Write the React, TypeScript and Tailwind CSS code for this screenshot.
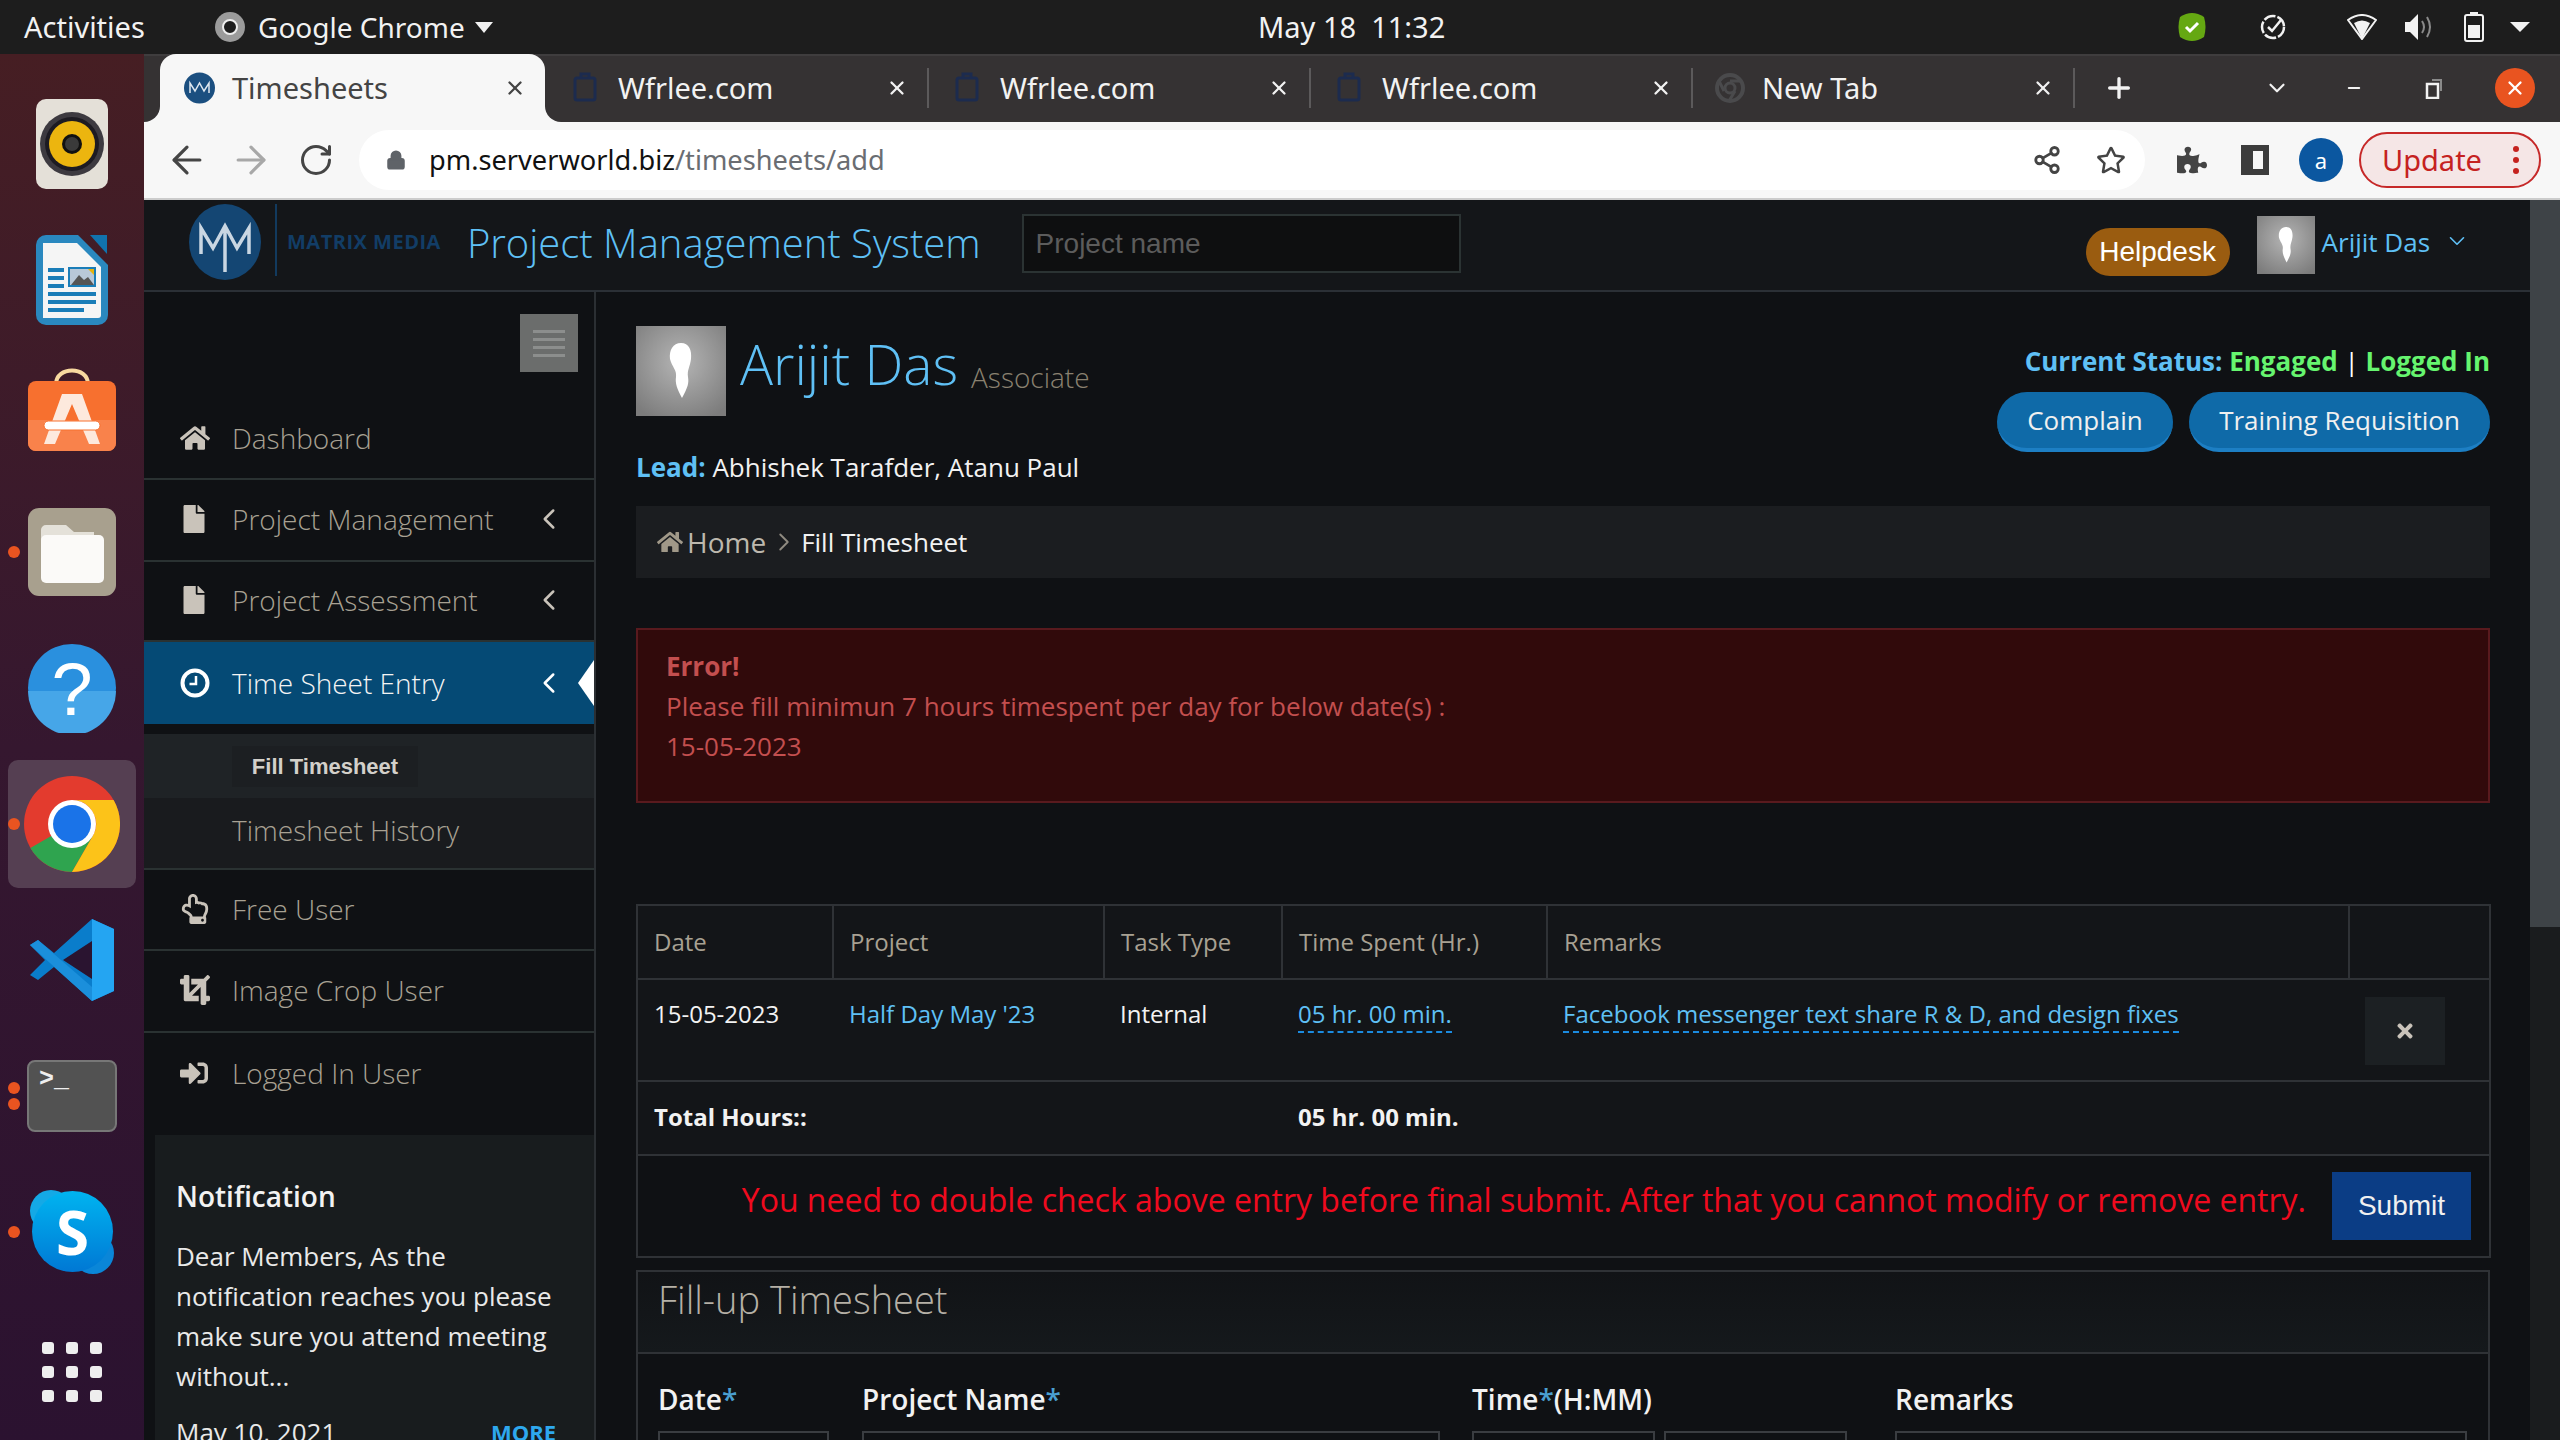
import { FaHome, FaFile, FaRegHandPointUp, FaCrop, FaSignInAlt, FaTimes, FaPuzzlePiece, FaRegStar } from 'react-icons/fa';
import { ArrowLeft, ArrowRight, RotateCw, Lock, Plus, ChevronDown, ChevronLeft, ChevronRight, X, Minus, Share2 } from 'lucide-react';

const UI_FONT = 'font-["Noto_Sans",sans-serif]';

// ---------- ubuntu dock icons ----------
function RhythmboxIcon() {
  return (
    <svg width="74" height="90" viewBox="0 0 74 90">
      <rect x="1" y="0" width="72" height="90" rx="10" fill="#e4e0d8" />
      <circle cx="37" cy="45" r="32" fill="#3d3a40" />
      <circle cx="37" cy="45" r="27" fill="#1d1b22" />
      <circle cx="37" cy="45" r="23" fill="#ecb50f" />
      <circle cx="37" cy="45" r="10" fill="#111" />
      <circle cx="37" cy="45" r="7" fill="#3a3a3a" />
    </svg>
  );
}

function WriterIcon() {
  return (
    <svg width="74" height="90" viewBox="0 0 74 90">
      <path d="M1 10a10 10 0 0 1 10-10h32l30 30v50a10 10 0 0 1-10 10H11a10 10 0 0 1-10-10z" fill="#2a88bf" />
      <path d="M8 8h34l24 24v48a3 3 0 0 1-3 3H8z" fill="#f5f5f5" />
      <path d="M55 0h17v19z" fill="#1173ad" />
      <g fill="#1a7db8">
        <rect x="13" y="33" width="16" height="4" /><rect x="13" y="41" width="16" height="4" /><rect x="13" y="49" width="16" height="4" />
        <rect x="13" y="57" width="48" height="4" /><rect x="13" y="65" width="48" height="4" /><rect x="13" y="73" width="36" height="4" />
        <rect x="33" y="32" width="28" height="20" />
      </g>
      <rect x="35" y="34" width="24" height="16" fill="#b8c8d8" />
      <path d="M36 50l8-10 5 5 4-3 6 8z" fill="#555" />
      <path d="M53 34h6v6z" fill="#e6b30d" />
    </svg>
  );
}

function SoftwareIcon() {
  return (
    <svg width="90" height="84" viewBox="0 0 90 84">
      <path d="M29 16c0-18 32-18 32 0" fill="none" stroke="#f8d9a0" strokeWidth="4" />
      <rect x="1" y="13" width="88" height="70" rx="8" fill="#f7702f" />
      <path d="M1 52h88v23a8 8 0 0 1-8 8H9a8 8 0 0 1-8-8z" fill="#f9824b" />
      <path d="M35 26h20l18 50H62L45 36 28 76H17z" fill="#fde9dd" />
      <rect x="17" y="53" width="56" height="9" rx="4.5" fill="#fff" stroke="#f7702f" strokeWidth="1" />
    </svg>
  );
}

function FilesIcon() {
  return (
    <svg width="90" height="88" viewBox="0 0 90 88">
      <rect x="1" y="0" width="88" height="88" rx="11" fill="#a8a08e" />
      <path d="M14 22a5 5 0 0 1 5-5h20l8 7h20v10H14z" fill="#e4e1d9" />
      <path d="M14 32a5 5 0 0 1 5-5h53a5 5 0 0 1 5 5v38a5 5 0 0 1-5 5H19a5 5 0 0 1-5-5z" fill="#fbfaf8" />
    </svg>
  );
}

function HelpIcon() {
  return (
    <svg width="90" height="90" viewBox="0 0 90 90">
      <circle cx="45" cy="45" r="44" fill="#2a90de" />
      <path d="M1 48h88a44 44 0 0 1-88 0z" fill="#46a6e8" />
      <text x="45" y="72" textAnchor="middle" fontSize="74" fontFamily="Liberation Sans, sans-serif" fill="#fff">?</text>
    </svg>
  );
}

function ChromeIcon({ size = 96 }: { size?: number }) {
  return (
    <svg width={size} height={size} viewBox="0 0 48 48">
      <circle cx="24" cy="24" r="24" fill="#e33b2e" />
      <path d="M24 24L3.2 36A24 24 0 0 0 24 48l10.4-18z" fill="#2fa44f" />
      <path d="M24 12h20.8A24 24 0 0 1 24 48l10.4-18A12 12 0 0 0 24 12z" fill="#fcc319" />
      <circle cx="24" cy="24" r="12" fill="#fff" />
      <circle cx="24" cy="24" r="9.5" fill="#1a73e8" />
    </svg>
  );
}

function VsCodeIcon() {
  return (
    <svg width="84" height="84" viewBox="0 0 84 82">
      <path d="M62 0L24 34 8 21 0 26l15 15L0 56l8 5 16-13 38 34 22-10V10z" fill="#0a7dcb" />
      <path d="M62 0l22 10v62L62 82z" fill="#24a5f2" />
      <path d="M62 22L33 41l29 19z" fill="#2a1430" />
      <path d="M8 21l54 47v14L0 26z" fill="#1b8fdb" />
    </svg>
  );
}

function TerminalIcon() {
  return (
    <div className="w-[90px] h-[72px] rounded-lg bg-[#525252] border-2 border-[#777] pl-[10px] pt-[6px] font-['Liberation_Mono',monospace] text-[25px] leading-[24px] font-bold text-[#eee]">
      {'>_'}
    </div>
  );
}

function SkypeIcon() {
  return (
    <div className="relative w-[84px] h-[84px]">
      <div className="absolute left-0 top-0 w-[42px] h-[42px] rounded-full bg-[#14a9e6]" />
      <div className="absolute right-0 bottom-0 w-[42px] h-[42px] rounded-full bg-[#0a86d8]" />
      <div className="absolute left-[2px] top-[1px] w-[81px] h-[81px] rounded-full bg-gradient-to-b from-[#00b4f0] to-[#0078d4] flex items-center justify-center font-['Open_Sans',sans-serif] text-[60px] font-bold text-white leading-none">
        S
      </div>
    </div>
  );
}

function RunDot({ top }: { top: number }) {
  return <span className="absolute left-[8px] w-[12px] h-[12px] rounded-full bg-[#e95420]" style={{ top }} />;
}

function Dock() {
  return (
    <aside className="relative w-[144px] shrink-0 flex flex-col items-center bg-gradient-to-b from-[#461e23] via-[#35172f] to-[#2b1230]">
      <div className="mt-[45px]"><RhythmboxIcon /></div>
      <div className="mt-[46px]"><WriterIcon /></div>
      <div className="mt-[43px]"><SoftwareIcon /></div>
      <div className="mt-[56px]"><FilesIcon /></div>
      <div className="mt-[47px]"><HelpIcon /></div>
      <div className="mt-[27px] w-[128px] h-[128px] rounded-[10px] bg-[#553f52] flex items-center justify-center"><ChromeIcon /></div>
      <div className="mt-[30px]"><VsCodeIcon /></div>
      <div className="mt-[58px]"><TerminalIcon /></div>
      <div className="mt-[58px]"><SkypeIcon /></div>
      <div className="mt-[68px] grid grid-cols-3 gap-[12px]">
        {Array.from({ length: 9 }).map((_, i) => (
          <span key={i} className="w-[12px] h-[12px] rounded-[3px] bg-[#eeeeee]" />
        ))}
      </div>
      <RunDot top={492} />
      <RunDot top={764} />
      <RunDot top={1028} />
      <RunDot top={1044} />
      <RunDot top={1172} />
    </aside>
  );
}

// ---------- gnome top bar ----------
function TopBar() {
  return (
    <header className={`h-[54px] shrink-0 bg-[#1d1d1d] flex items-center pr-[30px] text-[#f2f2f2] text-[28px] ${UI_FONT}`}>
      <div className="w-[1258px] shrink-0 pl-[24px] flex items-center">
        <span className="w-[190px] text-[29px]">Activities</span>
        <svg width="32" height="32" viewBox="0 0 32 32" className="mr-[12px]">
          <circle cx="16" cy="16" r="15" fill="#9b9b9b" />
          <circle cx="16" cy="16" r="7" fill="#1d1d1d" stroke="#eee" strokeWidth="2" />
        </svg>
        <span>Google Chrome</span>
        <span className="ml-[10px] w-0 h-0 border-x-[9px] border-x-transparent border-t-[11px] border-t-[#f2f2f2]" />
      </div>
      <span className="whitespace-pre text-[29px]">May 18  11:32</span>
      <svg width="32" height="32" viewBox="0 0 32 32" className="ml-auto">
        <path d="M4 6q12-8 24 0 3 10 0 20-12 8-24 0-3-10 0-20z" fill="#65a812" />
        <path d="M10 16l4 4 8-8" fill="none" stroke="#fff" strokeWidth="3" />
      </svg>
      <svg width="26" height="26" viewBox="0 0 26 26" className="ml-[52px]">
        <circle cx="13" cy="13" r="11" fill="none" stroke="#f2f2f2" strokeWidth="2.5" strokeDasharray="12 2" />
        <path d="M8 13l4 4 9-11" fill="none" stroke="#f2f2f2" strokeWidth="2.5" />
      </svg>
      <svg width="30" height="26" viewBox="0 0 30 26" className="ml-[61px]">
        <path d="M15 25L7 9q8-5 16 0z" fill="#f2f2f2" />
        <path d="M1 6q14-10 28 0L15 25z" fill="none" stroke="#f2f2f2" strokeWidth="2" />
      </svg>
      <svg width="30" height="28" viewBox="0 0 30 28" className="ml-[27px]">
        <path d="M1 9h5l8-8v26l-8-8H1z" fill="#f2f2f2" />
        <path d="M18 8q4 6 0 12M23 4q6 10 0 20" fill="none" stroke="#8a8a8a" strokeWidth="2" />
      </svg>
      <svg width="20" height="30" viewBox="0 0 20 30" className="ml-[30px]">
        <rect x="1" y="3" width="18" height="26" rx="2" fill="none" stroke="#f2f2f2" strokeWidth="2" />
        <rect x="6" y="0" width="8" height="3" fill="#f2f2f2" />
        <rect x="4" y="13" width="12" height="13" fill="#f2f2f2" />
      </svg>
      <span className="ml-[26px] w-0 h-0 border-x-[10px] border-x-transparent border-t-[10px] border-t-[#f2f2f2]" />
    </header>
  );
}

// ---------- chrome window ----------
function MatrixFavicon() {
  return (
    <svg width="31" height="32" viewBox="0 0 31 32" className="shrink-0">
      <circle cx="15.5" cy="16" r="15.5" fill="#1b4f80" />
      <path d="M6 21V11l5 8 4.500-8 4.500 8 5-8v10" fill="none" stroke="#dfe8f0" strokeWidth="1.500" />
    </svg>
  );
}

function ClockFavicon() {
  return (
    <svg width="32" height="32" viewBox="0 0 32 32" className="shrink-0">
      <rect x="6" y="6" width="20" height="22" rx="2" fill="none" stroke="#1c2b4e" strokeWidth="3" />
      <path d="M12 6V2h8v4" fill="none" stroke="#1c2b4e" strokeWidth="3" />
    </svg>
  );
}

function NewTabFavicon() {
  return (
    <svg width="30" height="32" viewBox="0 0 30 32" className="shrink-0">
      <circle cx="15" cy="16" r="13" fill="none" stroke="#4a4a4c" strokeWidth="4" />
      <circle cx="15" cy="16" r="5" fill="none" stroke="#4a4a4c" strokeWidth="3" />
      <path d="M15 9h12M9 19L4 9M20 19l-6 10" stroke="#4a4a4c" strokeWidth="3" />
    </svg>
  );
}

function Tab({ title, active, newTab }: { title: string; active?: boolean; newTab?: boolean }) {
  return (
    <div
      className={
        active
          ? 'relative w-[385px] h-[68px] mr-[2px] pl-[24px] pr-[19px] bg-[#f7f7f7] rounded-t-[16px] flex items-center text-[#444]'
          : 'w-[382px] h-[40px] pl-[22px] pr-[19px] border-r-2 border-r-[#5c5a5b] flex items-center text-[#f2f2f2]'
      }
    >
      {active && <span className="absolute left-[-16px] bottom-0 w-[16px] h-[16px] bg-[#f7f7f7]"><span className="block w-full h-full rounded-br-[16px] bg-[#353233]" /></span>}
      {active && <span className="absolute right-[-16px] bottom-0 w-[16px] h-[16px] bg-[#f7f7f7]"><span className="block w-full h-full rounded-bl-[16px] bg-[#353233]" /></span>}
      {active ? <MatrixFavicon /> : newTab ? <NewTabFavicon /> : <ClockFavicon />}
      <span className="ml-[17px]">{title}</span>
      <X className="ml-auto" size={22} strokeWidth={2.5} />
    </div>
  );
}

function TabStrip() {
  return (
    <div className={`h-[68px] shrink-0 pl-[16px] bg-[#353233] shadow-[inset_0_2px_0_#3f3d3e] flex items-center text-[29px] ${UI_FONT}`}>
      <Tab title="Timesheets" active />
      <Tab title="Wfrlee.com" />
      <Tab title="Wfrlee.com" />
      <Tab title="Wfrlee.com" />
      <Tab title="New Tab" newTab />
      <Plus className="ml-[28px] text-[#f2f2f2]" size={32} strokeWidth={2.5} />
      <ChevronDown className="ml-[129px] text-[#f2f2f2]" size={26} strokeWidth={2} />
      <Minus className="ml-[55px] text-[#f2f2f2]" size={18} strokeWidth={2.5} />
      <svg width="20" height="22" viewBox="0 0 20 22" className="ml-[61px] text-[#f2f2f2]">
        <rect x="3" y="7" width="11" height="14" fill="none" stroke="currentColor" strokeWidth="2.5" />
        <path d="M8 3h9v11" fill="none" stroke="#8a8a8a" strokeWidth="2" />
      </svg>
      <span className="ml-[51px] w-[40px] h-[40px] rounded-full bg-[#e95420] flex items-center justify-center text-white"><X size={22} strokeWidth={2.5} /></span>
    </div>
  );
}

function Toolbar() {
  return (
    <div className={`h-[78px] shrink-0 bg-[#f7f7f7] border-b-2 border-b-[#cccccc] flex items-center ${UI_FONT}`}>
      <ArrowLeft className="ml-[21px] text-[#454545]" size={44} strokeWidth={1.75} />
      <ArrowRight className="ml-[20px] text-[#a8a8a8]" size={44} strokeWidth={1.75} />
      <RotateCw className="ml-[25px] text-[#454545]" size={36} strokeWidth={2} />
      <div className="ml-[25px] w-[1786px] h-[60px] rounded-full bg-white flex items-center">
        <Lock className="ml-[27px] text-[#5f6368]" size={20} strokeWidth={3} fill="#5f6368" />
        <span className="ml-[23px] text-[27.2px] text-[#111]">pm.serverworld.biz<span className="text-[#6a6d72]">/timesheets/add</span></span>
        <Share2 className="ml-auto text-[#444]" size={30} strokeWidth={2.25} />
        <FaRegStar className="ml-[34px] mr-[19px] text-[#444]" size={30} />
      </div>
      <FaPuzzlePiece className="ml-[32px] text-[#444]" size={30} />
      <span className="ml-[34px] w-[28px] h-[30px] border-[6px] border-l-[12px] border-[#3c3c3c]" />
      <span className="ml-[30px] w-[44px] h-[44px] rounded-full bg-[#0b57a0] flex items-center justify-center text-white text-[22px]">a</span>
      <span className="ml-[16px] w-[182px] h-[56px] rounded-full border-2 border-[#c62828] bg-[#f5e6e6] pl-[21px] pr-[20px] flex items-center justify-between text-[#c5221f] text-[29px]">
        Update
        <span className="flex flex-col gap-[5px]">
          <span className="w-[6px] h-[6px] rounded-full bg-[#c5221f]" />
          <span className="w-[6px] h-[6px] rounded-full bg-[#c5221f]" />
          <span className="w-[6px] h-[6px] rounded-full bg-[#c5221f]" />
        </span>
      </span>
    </div>
  );
}

// ---------- page ----------
function AvatarPhoto({ size }: { size: number }) {
  return (
    <svg width={size} height={size} viewBox="0 0 90 90" className="shrink-0">
      <defs>
        <radialGradient id="av" cx="50%" cy="40%" r="70%">
          <stop offset="0%" stopColor="#b5b5b5" />
          <stop offset="100%" stopColor="#7c7c7c" />
        </radialGradient>
      </defs>
      <rect width="90" height="90" fill="url(#av)" />
      <path d="M45 17c8 0 11 7 10 16-1 8-4 11-3 18 1 6 0 10-6 21-5-9-7-15-6-21 1-7-4-10-6-18-1-9 3-16 11-16z" fill="#fff" />
    </svg>
  );
}

function SiteHeader() {
  return (
    <div className="h-[92px] shrink-0 border-b-2 border-b-[#2b3036] bg-[#141619] flex items-start">
      <svg width="72" height="76" viewBox="0 0 72 76" className="ml-[45px] mt-[4px] shrink-0">
        <ellipse cx="36" cy="38" rx="36" ry="38" fill="#144673" />
        <path d="M12 50V24l12 20 12-22 12 22 12-20v26M36 24v44" fill="none" stroke="#c9d6e2" strokeWidth="3.500" />
      </svg>
      <span className="ml-[14px] mt-[4px] w-[2px] h-[72px] bg-[#123a5e]" />
      <span className="ml-[10px] mt-[30px] font-['Open_Sans',sans-serif] font-bold text-[20px] leading-[24px] tracking-[0.5px] text-[#123d66] whitespace-nowrap">MATRIX MEDIA</span>
      <span className="ml-[26px] mt-[13px] font-['Open_Sans',sans-serif] font-light text-[40px] leading-[60px] text-[#5fc0f5] whitespace-nowrap">Project Management System</span>
      <input
        placeholder="Project name"
        readOnly
        className="ml-[41px] mt-[14px] w-[439px] h-[59px] bg-[#0e0f10] border-2 border-[#2b3333] px-[12px] font-['Liberation_Sans',sans-serif] text-[28px] placeholder:text-[#5c5c5c]"
      />
      <span className="ml-[625px] mt-[28px] w-[144px] h-[48px] rounded-[24px] bg-[#9a5c10] flex items-center justify-center font-['Liberation_Sans',sans-serif] text-[28px] text-white">Helpdesk</span>
      <div className="ml-[27px] mt-[16px]"><AvatarPhoto size={58} /></div>
      <span className="ml-[7px] mt-[23px] font-['Open_Sans',sans-serif] text-[26px] leading-[38px] text-[#5fc0f5] whitespace-nowrap">Arijit Das</span>
      <ChevronDown className="ml-[14px] mt-[28px] text-[#5fc0f5]" size={26} strokeWidth={1.5} />
    </div>
  );
}

function ThickClock() {
  return (
    <svg width="30" height="30" viewBox="0 0 30 30">
      <circle cx="15" cy="15" r="12.5" fill="none" stroke="currentColor" strokeWidth="4" />
      <path d="M16 8v8H9.500" fill="none" stroke="currentColor" strokeWidth="2.500" />
    </svg>
  );
}

type NavProps = { label: string; icon: React.ReactNode; caret?: boolean; active?: boolean; last?: boolean; height: string };

function NavItem({ label, icon, caret, active, last, height }: NavProps) {
  return (
    <div
      className={`relative flex items-center pl-[36px] pr-[28px] text-[28px] font-light ${height} ${
        active ? 'bg-[#054a75] text-[#f4f4f4]' : last ? 'pb-[2px] text-[#a8a193]' : 'pb-[2px] text-[#a8a193] border-b-2 border-b-[#2a3232]'
      }`}
    >
      <span className={`w-[52px] shrink-0 flex ${active ? 'text-white' : 'text-[#c9c3ba]'}`}>{icon}</span>
      <span>{label}</span>
      {caret && <ChevronLeft className={`ml-auto ${active ? 'text-white' : 'text-[#c9c3ba]'}`} size={34} strokeWidth={1.75} />}
      {active && (
        <span className="absolute right-0 top-[18px] w-0 h-0 border-y-[23px] border-y-transparent border-r-[16px] border-r-white" />
      )}
    </div>
  );
}

function Sidebar() {
  return (
    <aside className="w-[452px] shrink-0 border-r-2 border-r-[#2b2f33] bg-[#0f1114] font-['Open_Sans',sans-serif] overflow-hidden">
      <div className="h-[107px] pt-[22px] pr-[16px] flex justify-end">
        <span className="w-[58px] h-[58px] bg-[#6b6d6c] flex flex-col items-center justify-center gap-[5px]">
          <span className="w-[32px] h-[3px] bg-[#8c8e8d]" />
          <span className="w-[32px] h-[3px] bg-[#8c8e8d]" />
          <span className="w-[32px] h-[3px] bg-[#8c8e8d]" />
          <span className="w-[32px] h-[3px] bg-[#8c8e8d]" />
        </span>
      </div>
      <NavItem label="Dashboard" icon={<FaHome size={30} />} height="h-[81px]" />
      <NavItem label="Project Management" icon={<FaFile size={28} />} caret height="h-[82px]" />
      <NavItem label="Project Assessment" icon={<FaFile size={28} />} caret height="h-[80px]" />
      <NavItem label="Time Sheet Entry" icon={<ThickClock />} caret active height="h-[82px]" />
      <div className="mt-[10px] border-b-2 border-b-[#2a3232]">
        <div className="h-[64px] bg-[#1f2326] pl-[88px] flex items-center">
          <span className="w-[186px] h-[41px] bg-[#1c1f22] flex items-center justify-center font-['Liberation_Sans',sans-serif] font-bold text-[22px] text-[#d3d0ca]">Fill Timesheet</span>
        </div>
        <div className="h-[70px] bg-[#191b1e] pl-[88px] pb-[6px] flex items-center text-[28px] font-light text-[#a8a193]">Timesheet History</div>
      </div>
      <NavItem label="Free User" icon={<FaRegHandPointUp size={30} />} height="h-[81px]" />
      <NavItem label="Image Crop User" icon={<FaCrop size={30} />} height="h-[82px]" />
      <NavItem label="Logged In User" icon={<FaSignInAlt size={28} />} last height="h-[81px]" />
      <div className="ml-[11px] mt-[21px] h-[320px] bg-[#181c1e] pl-[21px] pr-[20px] pt-[41px] text-[#e9e9e9]">
        <div className="text-[28px] leading-[40px] font-semibold text-[#f2f2f2]">Notification</div>
        <p className="mt-[20px] text-[26px] leading-[40px]">Dear Members, As the notification reaches you please make sure you attend meeting without...</p>
        <div className="mt-[16px] flex items-center justify-between text-[26px] leading-[40px] pr-[18px]">
          <span>May 10, 2021</span>
          <span className="text-[22px] font-bold text-[#2ea8ee]">MORE</span>
        </div>
      </div>
    </aside>
  );
}

function ProfileBar() {
  return (
    <div className="flex justify-between">
      <div>
        <div className="flex items-center h-[90px]">
          <AvatarPhoto size={90} />
          <span className="ml-[14px] mb-[14px] font-light text-[55px] leading-[80px] text-[#5fc0f5]">Arijit Das</span>
          <span className="ml-[13px] mt-[12px] font-light text-[28px] text-[#8a8170]">Associate</span>
        </div>
        <div className="mt-[31px] text-[26px] leading-[40px] text-[#f2f2f2]">
          <strong className="font-bold text-[#5fc0f5]">Lead:</strong> Abhishek Tarafder, Atanu Paul
        </div>
      </div>
      <div className="flex flex-col items-end">
        <div className="mt-[16px] text-[26px] leading-[38px] font-bold text-[#66f56f]">
          <span className="text-[#5fc0f5]">Current Status:</span> Engaged <span className="font-normal text-white">|</span> Logged In
        </div>
        <div className="mt-[12px] flex gap-[16px] text-[26px] text-[#f0f0f0]">
          <span className="w-[176px] h-[60px] rounded-full bg-[#0f6aa8] border-b-4 border-b-[#1d7fc4] flex items-center justify-center">Complain</span>
          <span className="w-[301px] h-[60px] rounded-full bg-[#0f6aa8] border-b-4 border-b-[#1d7fc4] flex items-center justify-center">Training Requisition</span>
        </div>
      </div>
    </div>
  );
}

function Breadcrumb() {
  return (
    <div className="mt-[19px] h-[72px] bg-[#1b1d20] pl-[21px] flex items-center text-[26px]">
      <FaHome className="text-[#a09888]" size={26} />
      <span className="ml-[4px] text-[28px] text-[#bdb8ae]">Home</span>
      <ChevronRight className="ml-[3px] text-[#8f8a80]" size={30} strokeWidth={1.5} />
      <span className="ml-[2px] text-[#f2f2f2]">Fill Timesheet</span>
    </div>
  );
}

function ErrorBox() {
  return (
    <div className="mt-[50px] h-[175px] bg-[#310a0b] border-2 border-[#591a1e] px-[28px] pt-[16px] text-[26px] leading-[40px] text-[#c34f4f]">
      <strong className="font-bold">Error!</strong>
      <br />
      Please fill minimun 7 hours timespent per day for below date(s) :
      <br />
      15-05-2023
    </div>
  );
}

function EditableLink({ children }: { children: React.ReactNode }) {
  return <span className="text-[#5fc0f5] border-b-2 border-dashed border-b-[#1b8be0] pb-[1px]">{children}</span>;
}

function EntriesTable() {
  const cell = 'border-[#2f3236] px-[16px]';
  return (
    <table className="mt-[101px] w-[1853px] table-fixed border-collapse text-[24px] text-[#f2f2f2] bg-[#131518]">
      <colgroup>
        <col className="w-[196px]" />
        <col className="w-[271px]" />
        <col className="w-[178px]" />
        <col className="w-[265px]" />
        <col className="w-[802px]" />
        <col className="w-[141px]" />
      </colgroup>
      <thead>
        <tr className="h-[74px] text-left text-[#a8a193]">
          <th className={`${cell} border-2 font-normal`}>Date</th>
          <th className={`${cell} border-2 font-normal`}>Project</th>
          <th className={`${cell} border-2 font-normal`}>Task Type</th>
          <th className={`${cell} border-2 font-normal`}>Time Spent (Hr.)</th>
          <th className={`${cell} border-2 font-normal`}>Remarks</th>
          <th className={`${cell} border-2 font-normal`} />
        </tr>
      </thead>
      <tbody>
        <tr className="h-[102px]">
          <td className={`${cell} border-y-2 border-l-2 align-top pt-[16px]`}>15-05-2023</td>
          <td className={`${cell} border-y-2 align-top pt-[16px] text-[#5fc0f5]`}>Half Day May '23</td>
          <td className={`${cell} border-y-2 align-top pt-[16px]`}>Internal</td>
          <td className={`${cell} border-y-2 align-top pt-[16px]`}><EditableLink>05 hr. 00 min.</EditableLink></td>
          <td className={`${cell} border-y-2 align-top pt-[16px]`}><EditableLink>Facebook messenger text share R &amp; D, and design fixes</EditableLink></td>
          <td className={`${cell} border-y-2 border-r-2 align-top pt-[17px]`}>
            <span className="w-[80px] h-[68px] bg-[#1c2023] flex items-center justify-center text-[#c9c3ba]"><FaTimes size={22} /></span>
          </td>
        </tr>
        <tr className="h-[74px] font-bold">
          <td className={`${cell} border-y-2 border-l-2 pb-[2px]`} colSpan={3}>Total Hours::</td>
          <td className={`${cell} border-y-2 border-r-2 pb-[2px]`} colSpan={3}>05 hr. 00 min.</td>
        </tr>
        <tr className="h-[102px] bg-[#0f1114]">
          <td className={`${cell} border-2`} colSpan={6}>
            <div className="flex items-center justify-end">
              <span className="mb-[12px] text-[32px] text-[#f00a1e] whitespace-nowrap">You need to double check above entry before final submit. After that you cannot modify or remove entry.</span>
              <span className="ml-[26px] mr-[2px] w-[139px] h-[68px] shrink-0 bg-[#0b3d85] flex items-center justify-center font-['Liberation_Sans',sans-serif] text-[28px] text-[#f0f0f0]">Submit</span>
            </div>
          </td>
        </tr>
      </tbody>
    </table>
  );
}

function FormField({ label, star, suffix, width, children }: { label: string; star?: boolean; suffix?: string; width: string; children?: React.ReactNode }) {
  return (
    <div className={`${width} shrink-0`}>
      <div className="h-[40px] text-[28px] leading-[40px] font-semibold text-[#f2f2f2] whitespace-nowrap">
        {label}
        {star && <span className="text-[#4a9fd0]">*</span>}
        {suffix}
      </div>
      <div className="mt-[12px] flex gap-[9px]">{children ?? <span className="w-full h-[50px] border-2 border-[#3a3d41]" />}</div>
    </div>
  );
}

function FillUpPanel() {
  return (
    <section className="mt-[12px] w-[1854px] border-2 border-[#2f3236]">
      <div className="h-[82px] border-b-2 border-b-[#2f3236] bg-gradient-to-b from-[#111316] to-[#15191c] pl-[20px] pt-[3px] font-light text-[38px] leading-[48px] text-[#b5b0a6]">Fill-up Timesheet</div>
      <div className="pl-[20px] pt-[25px] flex text-[#f2f2f2]">
        <FormField label="Date" star width="w-[204px]"><span className="w-[171px] h-[50px] border-2 border-[#3a3d41]" /></FormField>
        <FormField label="Project Name" star width="w-[610px]"><span className="w-[578px] h-[50px] border-2 border-[#3a3d41]" /></FormField>
        <FormField label="Time" star suffix="(H:MM)" width="w-[423px]">
          <span className="w-[183px] h-[50px] border-2 border-[#3a3d41]" />
          <span className="w-[183px] h-[50px] border-2 border-[#3a3d41]" />
        </FormField>
        <FormField label="Remarks" width="w-[572px]" />
      </div>
    </section>
  );
}

export default function App() {
  return (
    <div className="w-[2560px] h-[1440px] flex flex-col overflow-hidden bg-[#0f1114]">
      <TopBar />
      <div className="flex-1 min-h-0 flex">
        <Dock />
        <div className="flex-1 min-w-0 flex flex-col">
          <TabStrip />
          <Toolbar />
          <div className="flex-1 min-h-0 flex">
            <div className="w-[2386px] flex flex-col min-h-0">
              <SiteHeader />
              <div className="flex-1 min-h-0 flex">
                <Sidebar />
                <main className="flex-1 min-w-0 px-[40px] pt-[34px] font-['Open_Sans',sans-serif] overflow-hidden">
                  <ProfileBar />
                  <Breadcrumb />
                  <ErrorBox />
                  <EntriesTable />
                  <FillUpPanel />
                </main>
              </div>
            </div>
            <div className="w-[30px] shrink-0 bg-[#1a1c1e]">
              <div className="h-[727px] bg-[#3e4347]" />
            </div>
          </div>
        </div>
      </div>
    </div>
  );
}
